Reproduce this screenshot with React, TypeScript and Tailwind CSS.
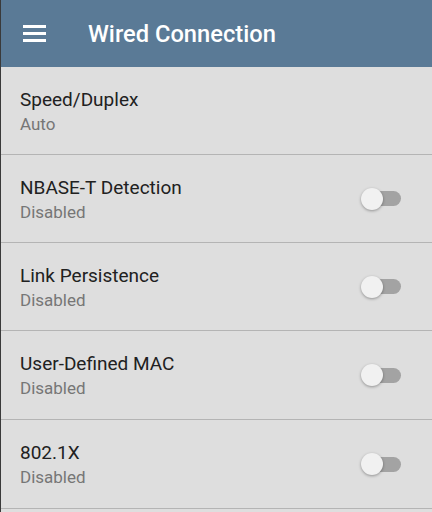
const ROWS: { title: string; value: string; toggle: boolean; h: string }[] = [
  { title: "Speed/Duplex", value: "Auto", toggle: false, h: "h-[88px]" },
  { title: "NBASE-T Detection", value: "Disabled", toggle: true, h: "h-[88px]" },
  { title: "Link Persistence", value: "Disabled", toggle: true, h: "h-[88px]" },
  { title: "User-Defined MAC", value: "Disabled", toggle: true, h: "h-[89px]" },
  { title: "802.1X", value: "Disabled", toggle: true, h: "h-[89px]" },
];

function Toggle() {
  return (
    <div className="relative w-[40px] h-[24px] mr-[31px] flex items-center">
      <div className="ml-[4px] w-[36px] h-[15px] rounded-full bg-[#a3a3a3]" />
      <div className="absolute left-0 top-px w-[22px] h-[22px] rounded-full bg-[#f1f1f1] shadow-[0_1px_3px_rgba(0,0,0,0.35)]" />
    </div>
  );
}

export default function App() {
  return (
    <div
      className="w-[432px] h-[512px] overflow-hidden bg-[#dedede] border-l border-[#3a3a3a]"
      style={{ fontFamily: "Roboto, 'Liberation Sans', sans-serif" }}
    >
      {/* Header */}
      <div className="h-[67px] bg-[#5a7a96] flex items-center">
        <div className="ml-[22px] w-[23px] flex flex-col gap-[4.5px]">
          <span className="block h-[2.5px] bg-white" />
          <span className="block h-[2.5px] bg-white" />
          <span className="block h-[2.5px] bg-white" />
        </div>
        <h1 className="ml-[42px] pt-[3px] text-white text-[23.7px] font-medium">Wired Connection</h1>
      </div>

      {ROWS.map((r) => (
        <div key={r.title} className={`${r.h} border-b border-[#b4b4b4] flex items-center justify-between pl-[19px]`}>
          <div className="flex flex-col pt-[2px]">
            <span className="text-[19px] leading-[24px] text-[#212121]">{r.title}</span>
            <span className="text-[17px] leading-[24px] text-[#767676]">{r.value}</span>
          </div>
          {r.toggle && <Toggle />}
        </div>
      ))}
    </div>
  );
}
